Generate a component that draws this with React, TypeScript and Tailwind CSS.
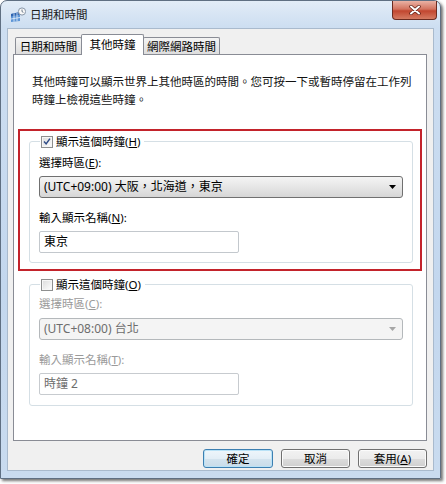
import React from "react";

const U = ({ c }: { c: string }) => <span className="underline">{c}</span>;

function Check({ checked }: { checked: boolean }) {
  return (
    <span className="flex w-[12px] h-[12px] border border-[#8e8f8f] bg-white items-center justify-center">
      <span className="flex w-[10px] h-[10px] border border-[#f6f6f6] bg-gradient-to-br from-[#dedede] to-[#fbfbfb] items-center justify-center">
        {checked && (
          <svg width="9" height="9" viewBox="0 0 9 9">
            <path d="M1.2 4.6 L3.5 7.2 L7.8 1.2" fill="none" stroke="#2f4b86" strokeWidth="1.7" />
          </svg>
        )}
      </span>
    </span>
  );
}

function Select({ text, disabled }: { text: string; disabled?: boolean }) {
  return (
    <div
      className={
        disabled
          ? "flex h-[22px] w-[364px] items-center rounded-[3px] border border-[#b4b8bb] bg-[#f4f4f4] pl-[4px] pr-[6px] text-[#6d6d6d]"
          : "flex h-[22px] w-[364px] items-center rounded-[3px] border border-[#707070] bg-[linear-gradient(180deg,#f4f4f4,#e6e6e6_50%,#d6d6d6)] pl-[4px] pr-[6px] text-black"
      }
    >
      <span className="flex-1 whitespace-nowrap text-[12px] leading-[16px]">{text}</span>
      <svg width="7" height="4" viewBox="0 0 7 4">
        <path d="M0 0h7L3.5 4z" fill={disabled ? "#a6a6a6" : "#000"} />
      </svg>
    </div>
  );
}

function Input({ text, disabled }: { text: string; disabled?: boolean }) {
  return (
    <div
      className={
        "flex h-[22px] w-[200px] items-center rounded-[2px] border bg-white pl-[4px] text-[12px] leading-[16px] " +
        (disabled ? "border-[#c7cbcf] text-[#6d6d6d]" : "border-[#c3c8cd] text-black")
      }
    >
      {text}
    </div>
  );
}

function Btn({ children, def }: { children: React.ReactNode; def?: boolean }) {
  return (
    <div
      className={
        "flex h-[19px] items-center justify-center rounded-[3px] border text-[11.5px] leading-[15px] text-black " +
        (def
          ? "w-[70px] border-[#3c7fb1] bg-[linear-gradient(180deg,#eef6fb,#e3eef6_50%,#d4e4ef_50%,#c9dce9)] shadow-[inset_0_0_0_1px_#b9e2f7]"
          : "w-[69px] border-[#707070] bg-[linear-gradient(180deg,#f2f2f2,#ebebeb_50%,#dddddd_50%,#cfcfcf)] shadow-[inset_0_0_0_1px_#fbfbfb]")
      }
    >
      {children}
    </div>
  );
}

export default function App() {
  return (
    <div className="h-[484px] w-[446px] bg-white font-['Noto_Sans','Noto_Sans_CJK_TC',sans-serif] text-black">
      <div className="flex h-[479px] w-[441px] flex-col rounded-t-[7px] border border-[#5f6f82] bg-[linear-gradient(180deg,#e2ecf7_0px,#cddef1_26px,#c3d7ee_60%,#c9dbef)] shadow-[2px_2px_3px_rgba(0,0,0,0.55)]">
        {/* title bar */}
        <div className="flex h-[27px] items-center">
          <svg className="ml-[9px]" width="16" height="16" viewBox="0 0 16 16">
            <path d="M1 7 L10 5 L10 14 L1 15 Z" fill="#5d95d6" />
            <path d="M1 7 L10 5 L10 7.5 L1 9.5 Z" fill="#2f64b0" />
            <path d="M4 6.4 V14.7 M7 5.8 V14.3 M1 12 L10 10.5" stroke="#e8f1fb" strokeWidth="0.8" />
            <circle cx="12" cy="4.5" r="3.6" fill="#f8f8f8" stroke="#8796a8" strokeWidth="1" />
            <path d="M12 2.5 V4.6 L13.4 5.4" stroke="#4a5a6e" strokeWidth="0.8" fill="none" />
          </svg>
          <span className="ml-[4px] text-[11.5px] leading-[16px] text-[#1b1b1b]">日期和時間</span>
          <div className="ml-auto mr-[3px] flex h-[19px] w-[45px] items-center justify-center self-start rounded-b-[4px] border border-t-0 border-[#6b2b20] bg-[linear-gradient(180deg,#eab2a4,#d3735f_45%,#c2462f_55%,#d57b62)]">
            <svg width="12" height="10" viewBox="0 0 12 10">
              <path d="M2 1.5 L10 8.5 M10 1.5 L2 8.5" stroke="#5a1c12" strokeWidth="3.4" strokeLinecap="round" />
              <path d="M2 1.5 L10 8.5 M10 1.5 L2 8.5" stroke="#ffffff" strokeWidth="2" strokeLinecap="round" />
            </svg>
          </div>
        </div>

        {/* client */}
        <div className="mx-[6px] mb-[7px] flex flex-1 flex-col border border-[#a9bacd] bg-[#f0f0f0]">
          {/* tabs */}
          <div className="relative z-10 ml-[7px] mt-[5px] flex h-[20px] items-end">
            <div className="flex h-[17px] w-[67px] items-center justify-center rounded-t-[2px] border border-b-0 border-[#898c95] bg-[linear-gradient(180deg,#f4f4f4,#e8e8e8_50%,#dedede)] text-[11.5px] leading-[15px]">
              日期和時間
            </div>
            <div className="-mb-[1px] -ml-[1px] flex h-[21px] w-[63px] items-start justify-center rounded-t-[2px] border border-b-0 border-[#898c95] bg-white pt-[2px] text-[11.5px] leading-[15px]">
              其他時鐘
            </div>
            <div className="-ml-[1px] flex h-[17px] w-[77px] items-center justify-center rounded-t-[2px] border border-b-0 border-[#898c95] bg-[linear-gradient(180deg,#f4f4f4,#e8e8e8_50%,#dedede)] text-[11.5px] leading-[15px]">
              網際網路時間
            </div>
          </div>

          {/* panel */}
          <div className="ml-[5px] flex h-[387px] w-[414px] flex-col border border-[#898c95] bg-white">
            <div className="whitespace-nowrap pl-[18px] pt-[18px] text-[11.5px] leading-[18px] text-[#111]">
              其他時鐘可以顯示世界上其他時區的時間。您可按一下或暫時停留在工作列
              <br />
              時鐘上檢視這些時鐘。
            </div>

            {/* red highlight */}
            <div className="ml-[4px] mt-[20px] w-[404px] border-2 border-[#c3232b] pb-[6px] pl-[9px] pr-[7px] pt-[4px]">
              <fieldset className="w-[384px] rounded-[3px] border border-[#d5dfe5] pb-[9px] pl-[9px] pr-[9px]">
                <legend className="ml-[1px] px-[1px]">
                  <span className="flex items-center gap-[3px] text-[11.5px] leading-[13px]">
                    <Check checked />
                    <span className="pr-[3px]">
                      顯示這個時鐘(<U c="H" />)
                    </span>
                  </span>
                </legend>
                <div className="mt-[7px] text-[11.5px] leading-[16px]">
                  選擇時區(<U c="E" />):
                </div>
                <div className="mt-[5px]">
                  <Select text="(UTC+09:00) 大阪，北海道，東京" />
                </div>
                <div className="mt-[12px] text-[11.5px] leading-[16px]">
                  輸入顯示名稱(<U c="N" />):
                </div>
                <div className="mt-[5px]">
                  <Input text="東京" />
                </div>
              </fieldset>
            </div>

            <fieldset className="ml-[15px] mt-[7px] w-[384px] rounded-[3px] border border-[#d5dfe5] pb-[10px] pl-[9px] pr-[9px]">
              <legend className="ml-[1px] px-[1px]">
                <span className="flex items-center gap-[3px] text-[11.5px] leading-[13px]">
                  <Check checked={false} />
                  <span className="pr-[3px]">
                    顯示這個時鐘(<U c="O" />)
                  </span>
                </span>
              </legend>
              <div className="mt-[5px] text-[11.5px] leading-[16px] text-[#9a9a9a]">
                選擇時區(<U c="C" />):
              </div>
              <div className="mt-[6px]">
                <Select text="(UTC+08:00) 台北" disabled />
              </div>
              <div className="mt-[12px] text-[11.5px] leading-[16px] text-[#9a9a9a]">
                輸入顯示名稱(<U c="T" />):
              </div>
              <div className="mt-[5px]">
                <Input text="時鐘 2" disabled />
              </div>
            </fieldset>
          </div>

          {/* buttons */}
          <div className="mt-[8px] flex justify-end gap-[8px] pr-[6px]">
            <Btn def>確定</Btn>
            <Btn>取消</Btn>
            <Btn>
              套用(<U c="A" />)
            </Btn>
          </div>
        </div>
      </div>
    </div>
  );
}
